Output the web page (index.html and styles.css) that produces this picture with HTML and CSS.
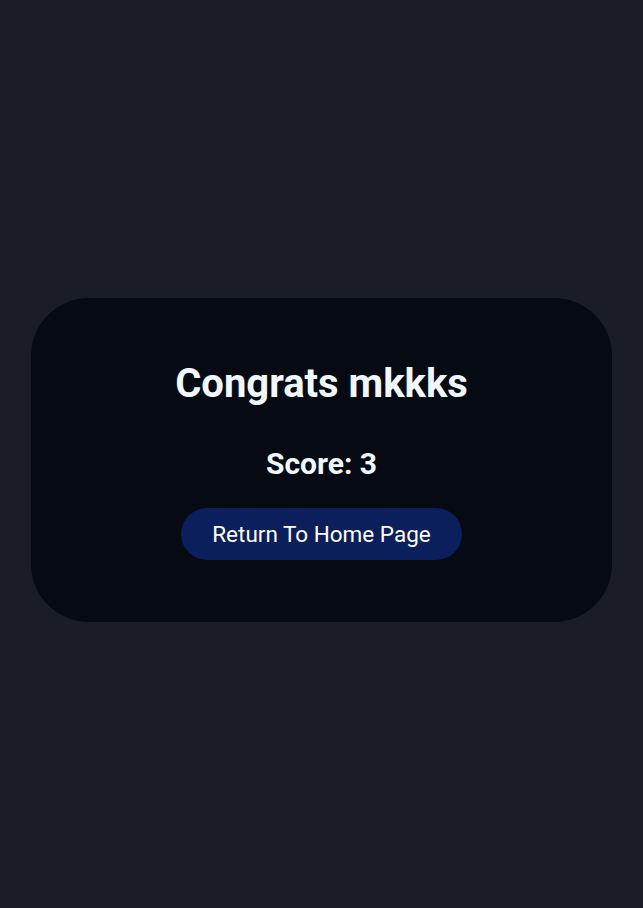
FILE: index.html
```html
<!DOCTYPE html>
<html>
<head>
<meta charset="utf-8">
<link rel="stylesheet" href="styles.css">
</head>
<body>
<main class="page">
  <section class="card">
    <h1 class="title">Congrats mkkks</h1>
    <h2 class="score">Score: 3</h2>
    <button class="home-btn">Return To Home Page</button>
  </section>
</main>
</body>
</html>
```

FILE: styles.css
```css
html, body {
  margin: 0;
  padding: 0;
  background: #1a1d25;
  font-family: Roboto, "Liberation Sans", sans-serif;
}
.page {
  height: 908px;
  box-sizing: border-box;
  padding: 298px 31px 0;
}
.card {
  height: 324px;
  box-sizing: border-box;
  background: #060a13;
  border-radius: 58px;
  display: flex;
  flex-direction: column;
  align-items: center;
  padding-top: 62px;
}
.title {
  margin: 0;
  color: #f0f8ff;
  font-size: 40px;
  font-weight: 700;
  line-height: 48px;
}
.score {
  margin: 38px 0 0;
  color: #f0f8ff;
  font-size: 30px;
  font-weight: 700;
  line-height: 36px;
}
.home-btn {
  margin-top: 26px;
  width: 281px;
  height: 52px;
  border: none;
  border-radius: 26px;
  background: #0a1f5c;
  color: #ffffff;
  font-family: Roboto, "Liberation Sans", sans-serif;
  font-size: 22.5px;
  padding: 0;
}
```
